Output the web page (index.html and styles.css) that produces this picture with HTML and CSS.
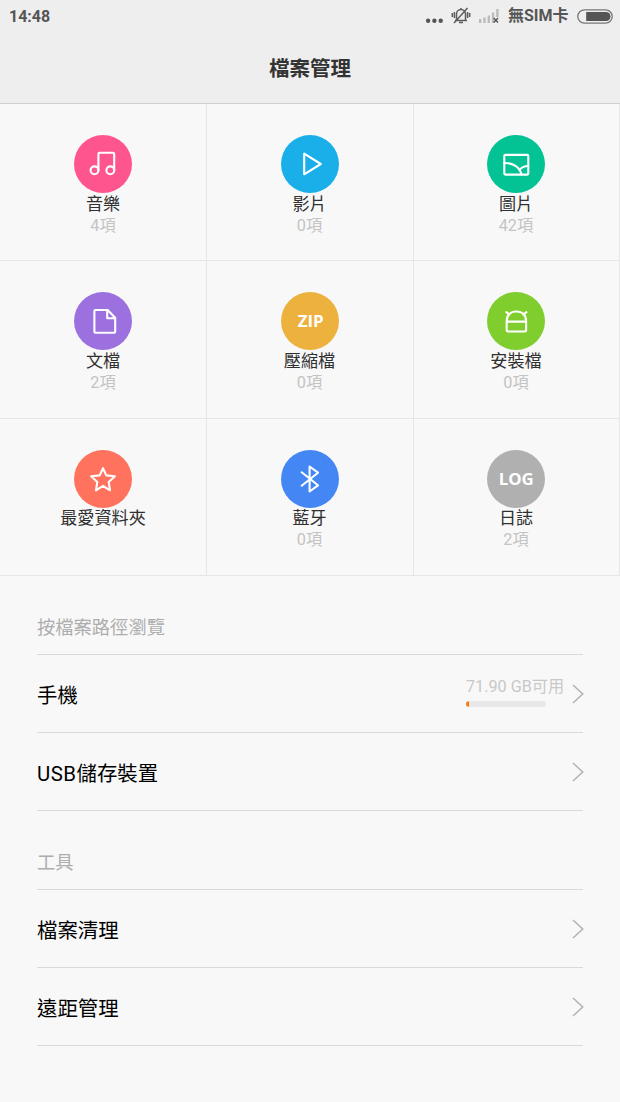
FILE: index.html
```html
<!DOCTYPE html>
<html lang="zh-Hant">
<head>
<meta charset="utf-8">
<title>檔案管理</title>
<link rel="stylesheet" href="styles.css">
</head>
<body>
<header class="header">
  <div class="status">
    <span class="time">14:48</span>
    <svg class="dots" width="18" height="6" viewBox="0 0 18 6"><circle cx="3.1" cy="2.8" r="2.2"/><circle cx="9.4" cy="2.8" r="2.2"/><circle cx="15.7" cy="2.8" r="2.2"/></svg>
    <svg class="bell" width="20" height="18" viewBox="0 0 20 18"><path d="M4 13.5h12M5.5 13V7a4.5 4.5 0 0 1 9 0v6M8 15.5h4M10 1v2M3 16 16.5 1M3.4 5v6M16.6 5v6M1.3 6v4M18.7 6v4"/></svg>
    <svg class="signal" width="21" height="16" viewBox="0 0 21 16"><path d="M0 11h2.4v4H0zM4.3 9.5h2.4V15H4.3zM8.6 7.5H11V15H8.6zM12.9 4.5h2.4V15h-2.4zM17.2 1h2.4v8h-2.4z"/><path class="cross" d="m14.7 10 4.3 4.5m0-4.5-4.3 4.5"/></svg>
    <span class="carrier">無SIM卡</span>
    <svg class="battery" width="36" height="15" viewBox="0 0 36 15"><rect class="shell" x=".8" y=".8" width="34.4" height="13.4" rx="6.7"/><path d="M9.2 3H29a4.5 4.5 0 0 1 0 9H9.2z"/></svg>
  </div>
  <h1 class="title">檔案管理</h1>
</header>

<main>
  <section class="grid">
    <div class="cell">
      <svg class="icon music" viewBox="0 0 58 58"><circle class="disc" cx="29" cy="29" r="29"/><circle cx="20.5" cy="35.3" r="3.9"/><circle cx="36.3" cy="35.3" r="3.9"/><path d="M24.4 35.3V19.2q0-1.4 1.4-1.4h13q1.4 0 1.4 1.4v16.1"/></svg>
      <span class="name">音樂</span><span class="count">4項</span>
    </div>
    <div class="cell">
      <svg class="icon video" viewBox="0 0 58 58"><circle class="disc" cx="29" cy="29" r="29"/><path d="M23.2 18.7v20.6L39.8 29z"/></svg>
      <span class="name">影片</span><span class="count">0項</span>
    </div>
    <div class="cell">
      <svg class="icon photo" viewBox="0 0 58 58"><circle class="disc" cx="29" cy="29" r="29"/><rect x="17.3" y="19.9" width="24" height="19.7" rx="1"/><path d="M17.3 28c8.5-.3 15.5 4.2 17.2 11.4M32.4 35.2c1.8-2.7 4.5-4.2 8.9-4.2"/></svg>
      <span class="name">圖片</span><span class="count">42項</span>
    </div>
    <div class="cell">
      <svg class="icon doc" viewBox="0 0 58 58"><circle class="disc" cx="29" cy="29" r="29"/><path d="M21.4 18h12.2l7.6 7.8v14q0 1-1 1H21.4q-1 0-1-1V19q0-1 1-1zM33.2 18v8.2h8"/></svg>
      <span class="name">文檔</span><span class="count">2項</span>
    </div>
    <div class="cell">
      <svg class="icon zip" viewBox="0 0 58 58"><circle class="disc" cx="29" cy="29" r="29"/><text x="29.7" y="35" textLength="26" lengthAdjust="spacingAndGlyphs">ZIP</text></svg>
      <span class="name">壓縮檔</span><span class="count">0項</span>
    </div>
    <div class="cell">
      <svg class="icon apk" viewBox="0 0 58 58"><circle class="disc" cx="29" cy="29" r="29"/><path d="M19.7 29.6h19.4M19.7 38.2v-9c0-6 3.7-9.7 9.7-9.7s9.7 3.7 9.7 9.7v9q0 1.3-1.3 1.3H21q-1.3 0-1.3-1.3zM19.4 20.2l3.1 2.4M39.4 20.2l-3.1 2.4"/></svg>
      <span class="name">安裝檔</span><span class="count">0項</span>
    </div>
    <div class="cell">
      <svg class="icon star" viewBox="0 0 58 58"><circle class="disc" cx="29" cy="29" r="29"/><path d="m29 18.2 3.3 7.2 8.6.8-6.2 5.7 1.3 8.4-7-4.5-7 4.5 1.3-8.4-6.2-5.7 8.6-.8z"/></svg>
      <span class="name">最愛資料夾</span>
    </div>
    <div class="cell">
      <svg class="icon bluetooth" viewBox="0 0 58 58"><circle class="disc" cx="29" cy="29" r="29"/><path d="m20.7 22.3 16.3 13-8.4 6.2v-25l8.4 6.2-16.3 13"/></svg>
      <span class="name">藍牙</span><span class="count">0項</span>
    </div>
    <div class="cell">
      <svg class="icon log" viewBox="0 0 58 58"><circle class="disc" cx="29" cy="29" r="29"/><text x="29.2" y="35" textLength="35" lengthAdjust="spacingAndGlyphs">LOG</text></svg>
      <span class="name">日誌</span><span class="count">2項</span>
    </div>
  </section>

  <section class="list">
    <h2 class="heading">按檔案路徑瀏覽</h2>
    <div class="row">
      <span class="label">手機</span>
      <div class="storage"><span class="free">71.90 GB可用</span><div class="bar"><div class="used"></div></div></div>
      <svg class="chevron" viewBox="0 0 12 20"><path d="m1 1 9.7 9L1 19"/></svg>
    </div>
    <div class="row">
      <span class="label"><span class="latin">USB</span>儲存裝置</span>
      <svg class="chevron" viewBox="0 0 12 20"><path d="m1 1 9.7 9L1 19"/></svg>
    </div>
  </section>
  <section class="list">
    <h2 class="heading">工具</h2>
    <div class="row">
      <span class="label">檔案清理</span>
      <svg class="chevron" viewBox="0 0 12 20"><path d="m1 1 9.7 9L1 19"/></svg>
    </div>
    <div class="row">
      <span class="label">遠距管理</span>
      <svg class="chevron" viewBox="0 0 12 20"><path d="m1 1 9.7 9L1 19"/></svg>
    </div>
  </section>
</main>
</body>
</html>
```
FILE: styles.css
```css
* { box-sizing: border-box; }
body {
  margin: 0;
  height: 1102px;
  overflow: hidden;
  background: #f8f8f8;
  font-family: Roboto, "Noto Sans CJK TC", sans-serif;
  color: #000;
}
svg { display: block; flex: none; }
.header {
  height: 104px;
  background: #eee;
  border-bottom: 1px solid #d0d0d0;
}
.status {
  display: flex;
  align-items: center;
  height: 32px;
  padding: 0 7px 0 9px;
  color: #555;
  font-size: 16px;
  font-weight: 700;
  line-height: 32px;
}
.time { margin-right: auto; padding-top: 1px; }
.dots { margin: 9px 8px 0 0; fill: #555; }
.bell { margin-right: 8px; fill: none; stroke: #5c5c5c; stroke-width: 1.5; }
.signal { margin-right: 8px; fill: #bbb; }
.signal .cross { fill: none; stroke: #555; stroke-width: 1.4; }
.carrier { width: 61px; margin-right: 8px; white-space: nowrap; }
.battery { fill: #555; }
.battery .shell { fill: none; stroke: #777; stroke-width: 1.3; }
.title {
  margin: 0;
  padding-top: 19px;
  color: #333;
  font-size: 20.5px;
  font-weight: 700;
  line-height: 36px;
  text-align: center;
}
.grid {
  display: grid;
  grid-template-columns: 207px 207px 206px;
  grid-template-rows: 157px 158px 157px;
}
.cell {
  display: flex;
  flex-direction: column;
  align-items: center;
  padding: 31px 1px 0 0;
  border-right: 1px solid #e6e6e6;
  border-bottom: 1px solid #e6e6e6;
}
.cell:nth-child(3n+1) { padding-right: 0; }
.icon {
  width: 58px;
  height: 58px;
  margin-bottom: 1px;
  fill: none;
  stroke: #fff;
  stroke-width: 2.1;
  stroke-linejoin: round;
  stroke-linecap: round;
}
.cell:nth-child(n+7) .icon { margin-bottom: 0; }
.disc { stroke: none; }
.music .disc { fill: #ff558f; }
.video .disc { fill: #1aafe9; }
.photo .disc { fill: #03c294; }
.doc .disc { fill: #9c70df; }
.zip .disc { fill: #edb13d; }
.apk .disc { fill: #7fce2e; }
.star .disc { fill: #ff725d; }
.bluetooth .disc { fill: #4487f4; }
.log .disc { fill: #b0b0b0; }
.icon text {
  fill: #fff;
  stroke: none;
  font: 700 16.5px "Open Sans", sans-serif;
  text-anchor: middle;
}
.name {
  height: 21px;
  color: #303030;
  font-size: 17.1px;
  line-height: 20px;
}
.count {
  color: #c4c4c4;
  font-size: 16.3px;
  line-height: 22px;
}
.list { padding: 0 37px; }
.heading {
  height: 79px;
  margin: 0;
  padding-top: 38px;
  border-bottom: 1px solid #d9d9d9;
  color: #adadad;
  font-size: 18.3px;
  font-weight: 400;
  line-height: 28px;
}
.row {
  display: flex;
  align-items: center;
  height: 78px;
  border-bottom: 1px solid #d9d9d9;
}
.label {
  margin-right: auto;
  padding-top: 5px;
  font-size: 20.4px;
  line-height: 30px;
}
.latin { letter-spacing: 0.5px; }
.storage { width: 98px; margin-right: 8px; }
.free {
  display: block;
  color: #c8c8c8;
  font-size: 16.2px;
  line-height: 24px;
  white-space: nowrap;
}
.bar {
  width: 80px;
  height: 6px;
  margin: 2px 0 5px;
  border-radius: 3px;
  background: #e8e8e8;
  overflow: hidden;
}
.used {
  width: 3px;
  height: 6px;
  border-radius: 3px;
  background: #f57c13;
}
.chevron {
  width: 12px;
  height: 20px;
  margin-right: -1px;
  fill: none;
  stroke: #b4b4b4;
  stroke-width: 1.6;
}
```
